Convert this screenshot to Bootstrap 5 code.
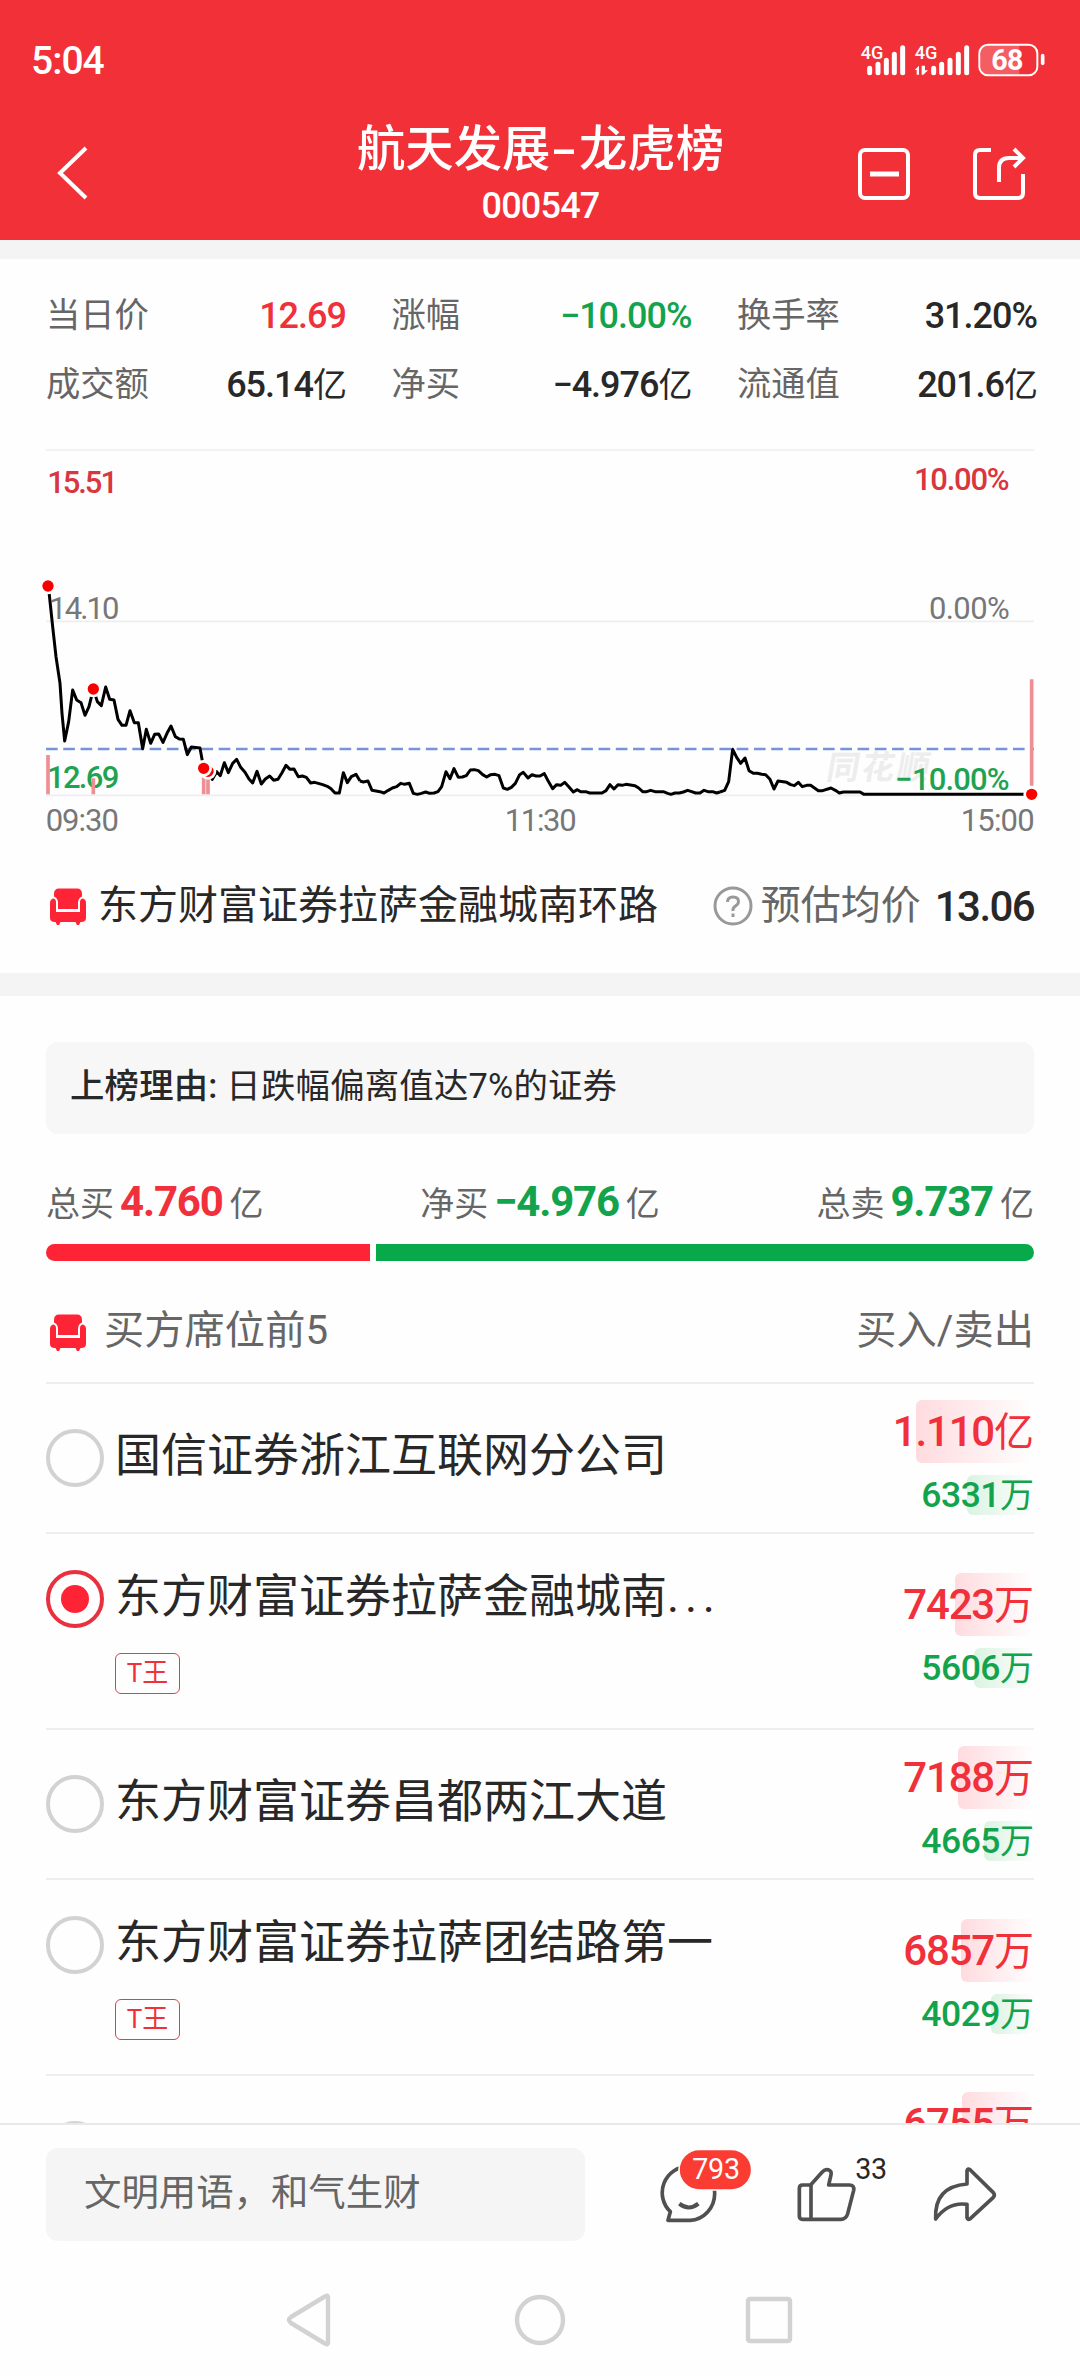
<!DOCTYPE html>
<html lang="zh-CN">
<head>
<meta charset="utf-8">
<meta name="viewport" content="width=device-width, initial-scale=1">
<title>航天发展-龙虎榜</title>
<link rel="stylesheet" href="https://cdn.jsdelivr.net/npm/bootstrap@5.3.0/dist/css/bootstrap.min.css">
<style>
:root{--up:#f0303a;--down:#12a34c;--ink:#282828;--muted:#666;--line:#eee}
html,body{height:100%}
body{font-family:Roboto,"Noto Sans CJK SC",sans-serif;color:var(--ink);background:#fefefe;overflow:hidden}
svg{display:block;flex:none}
.screen{width:1080px;height:2376px;overflow:hidden}
.gutter{padding-left:46px;padding-right:46px}
.up{color:var(--up)}.down{color:var(--down)}.muted{color:var(--muted)}
.topbar{background:#f13037;color:#fff;height:240px}
.status{height:120px;padding:0 34px 0 31px}
.clock{font-size:39px;font-weight:500;line-height:1;letter-spacing:-1px;padding-top:2px}
.titlebar{height:120px;padding:0 54px 0 57px}
.titlebar>svg,.actions{margin-top:27px}
.actions{gap:61px}
.heading{font-size:48.4px;font-weight:500;line-height:58px;margin-top:1px}
.dash{display:inline-block;transform:scaleX(1.6);margin:0 6px}
.code{font-size:36px;font-weight:500;line-height:50px;margin-top:2px;letter-spacing:-.8px}
.back-side{width:167px}
.strip{background:#f4f4f4;flex:none}
.stats{padding-top:22px;height:181px}
.stat-row{column-gap:45.5px;height:69px}
.stat{width:300px;flex:none;font-size:34.3px}
.stat b,.fig{font-weight:500;letter-spacing:-1px}
.stat b{font-size:36px}
.stat b small{font-size:34px;font-weight:400}
.seat{height:133px;font-size:40px;padding-bottom:1px}
.seat .price{font-size:42px;font-weight:500;letter-spacing:-1.6px;margin-left:14px}
.reason{margin:46px 46px 0;height:92px;border-radius:12px;background:#f7f7f7;padding:0 24px 3px;font-size:34.4px;letter-spacing:.2px}
.reason strong{font-weight:500}
.totals{height:64px;margin-top:35px;font-size:34px}
.totals b{font-size:42px;font-weight:700;letter-spacing:-1.2px;margin:0 7px 0 6px}
.balance{gap:6px;height:17px;margin-top:11px}
.balance span:first-child{background:#ff2435;border-radius:9px 0 0 9px}
.balance span:last-child{background:#08a94b;border-radius:0 9px 9px 0}
.seats-head{height:121px;font-size:40.2px;padding-top:20px;letter-spacing:.1px}
.seats-head span:first-of-type{padding-left:2px}
.seat-list{flex:1;min-height:0;overflow:hidden}
.entry{border-top:2px solid var(--line);height:150px;flex:none}
.entry.tagged{height:196px}
.pick{width:58px;height:58px;border:4px solid #d2d2d2;border-radius:50%;margin-top:45px;flex:none}
.tagged .pick{margin-top:36px}
.pick.on{border-color:#e8303f;padding:11px}
.pick.on::before{content:"";display:block;width:100%;height:100%;border-radius:50%;background:#ff2435}
.who{margin-left:11px}
.name{font-size:46px;line-height:60px;margin-top:41px;white-space:nowrap}
.name i{font-style:normal;letter-spacing:5.8px}
.tagged .name{margin-top:32px}
.label-t{width:65px;height:41px;border:1.5px solid #d04552;border-radius:6px;color:var(--up);font-size:26px;margin-top:27px}
.deal{gap:12px;padding-bottom:2px}
.buy,.sell{font-weight:500;text-align:right;white-space:nowrap;position:relative;z-index:0}
.buy{height:63px;line-height:63px;font-size:42px;color:var(--up);letter-spacing:-1.2px}
.sell{height:40px;line-height:41px;font-size:35.5px;color:var(--down);letter-spacing:-.5px}
.buy span,.sell span{font-weight:400;letter-spacing:0}
.buy span{font-size:40px}.sell span{font-size:34px}
.tint{position:absolute;z-index:-1;right:0;top:0;bottom:0;border-radius:6px 0 0 6px}
.buy .tint{background:linear-gradient(90deg,#ffdbdf,#fefefe)}
.sell .tint{background:linear-gradient(90deg,#dbf3e2,#fefefe)}
.composer{border-top:2px solid #e9e9e9;height:135px;flex:none;padding-top:23px}
.prompt{width:539px;height:93px;border-radius:12px;background:#f5f5f5;color:var(--muted);font-size:37.4px;padding:0 0 3px 38px}
.tools{margin-left:75px}
.sysnav{height:118px;flex:none}
.sysnav svg path,.sysnav svg circle,.sysnav svg rect{fill:none;stroke:#d2d2d2;stroke-width:4.4;stroke-linejoin:round}
</style>
<script src="https://cdn.jsdelivr.net/npm/bootstrap@5.3.0/dist/js/bootstrap.bundle.min.js"></script>
</head>
<body>
<svg width="0" height="0" class="position-absolute">
  <symbol id="sofa" viewBox="0 0 36 38">
    <g fill="#ff2435"><path d="M9 1.500H27Q32 1.500 32 7V9.500Q28 11 28 16V22H8V16Q8 11 4 9.500V7Q4 1.500 9 1.500Z"/>
    <path d="M3.500 11.500Q6 12 6 15V25H30V15Q30 12 32.500 11.500Q36 12 36 16V31Q36 35 31 35H5Q0 35 0 31V16Q0 12 3.500 11.500Z"/>
    <path d="M5 34H11L9 38H7ZM25 34H31L29 38H27Z"/></g>
  </symbol>
</svg>
<div class="screen d-flex flex-column">
  <header class="topbar flex-shrink-0">
    <div class="status d-flex justify-content-between align-items-center">
      <div class="clock">5:04</div>
      <svg width="186" height="36" viewBox="0 0 558 108" fill="#fff">
        <g transform="translate(-63 -33)">
          <g font-family="Roboto" font-weight="500" font-size="55"><text x="65" y="85" textLength="68" lengthAdjust="spacingAndGlyphs">4G</text><text x="227" y="85" textLength="68" lengthAdjust="spacingAndGlyphs">4G</text></g>
          <g stroke="#fff" stroke-width="15" stroke-linecap="round"><path d="M92 112V125M117 100V125M142 88V125M166 70V125M191 50V125M284 112V125M308 100V125M333 88V125M358 70V125M383 50V125"/></g>
          <path d="M240 131V104L227 117H233V131ZM248 104V131H253L267 118H258V104Z"/>
          <path d="M438 43H541V131H438Q425 131 425 118V56Q425 43 438 43Z" opacity=".22"/>
          <rect x="421" y="41" width="174" height="92" rx="26" fill="none" stroke="#fff" stroke-width="6"/>
          <path d="M611 74V97" stroke="#fff" stroke-width="11" stroke-linecap="round"/>
          <text x="457" y="116" font-family="Roboto" font-weight="700" font-size="86" textLength="96">68</text>
        </g>
      </svg>
    </div>
    <div class="titlebar d-flex justify-content-between align-items-start">
      <div class="back-side pt-4"><svg width="32" height="56" viewBox="0 0 32 56"><path d="M29 5L3 30L29 55" transform="translate(0 -1)" fill="none" stroke="#fff" stroke-width="4"/></svg></div>
      <div class="text-center"><div class="heading">航天发展<span class="dash">-</span>龙虎榜</div><div class="code">000547</div></div>
      <div class="actions d-flex">
        <svg width="54" height="54" viewBox="0 0 54 54" fill="none" stroke="#fff" stroke-width="4"><rect x="3" y="3" width="48" height="48" rx="5"/><path d="M13 27H42" stroke-width="5"/></svg>
        <svg width="54" height="54" viewBox="0 0 54 54" fill="none" stroke="#fff" stroke-width="4"><path d="M19 3H8Q3 3 3 8V46Q3 51 8 51H46Q51 51 51 46V27"/><path d="M27 35V21Q27 11 37 11H50M42 2L51 11L42 20"/></svg>
      </div>
    </div>
  </header>
  <div class="strip" style="height:19px"></div>

  <section class="stats gutter flex-shrink-0">
    <div class="stat-row d-flex align-items-center">
      <div class="stat d-flex justify-content-between align-items-center"><span class="muted">当日价</span><b class="up">12.69</b></div>
      <div class="stat d-flex justify-content-between align-items-center"><span class="muted">涨幅</span><b class="down">−10.00%</b></div>
      <div class="stat d-flex justify-content-between align-items-center"><span class="muted">换手率</span><b>31.20%</b></div>
    </div>
    <div class="stat-row d-flex align-items-center">
      <div class="stat d-flex justify-content-between align-items-center"><span class="muted">成交额</span><b>65.14<small>亿</small></b></div>
      <div class="stat d-flex justify-content-between align-items-center"><span class="muted">净买</span><b>−4.976<small>亿</small></b></div>
      <div class="stat d-flex justify-content-between align-items-center"><span class="muted">流通值</span><b>201.6<small>亿</small></b></div>
    </div>
  </section>

  <svg width="1080" height="400" viewBox="0 1320 3240 1200" font-family="Roboto" font-size="93">
    <path d="M138 1350H3102M138 1864H3102M138 2386H3102" stroke="#eee" stroke-width="5"/>
    <text x="2476" y="2337" font-family="Noto Sans CJK SC" font-weight="700" font-size="98" fill="#ededed" transform="translate(412 0) skewX(-10)" textLength="308">同花顺</text>
    <path d="M138 2247H3102" stroke="#7893da" stroke-width="7" stroke-dasharray="35 16.800"/>
    <g fill="#777">
      <text x="142" y="1479" fill="#d9363f" font-weight="500" textLength="212">15.51</text>
      <text x="2742" y="1470" fill="#d9363f" font-weight="500" textLength="287">10.00%</text>
      <text x="148" y="1857" textLength="210">14.10</text>
      <text x="2787" y="1857" textLength="242">0.00%</text>
      <text x="141" y="2364" fill="#1fa352" font-weight="500" textLength="217">12.69</text>
      <text x="2686" y="2371" fill="#1fa352" font-weight="500" textLength="343">−10.00%</text>
      <text x="137" y="2494" textLength="220">09:30</text>
      <text x="1514" y="2494" textLength="216">11:30</text>
      <text x="2882" y="2494" textLength="222">15:00</text>
    </g>
    <path d="M144 2265V2383M280 2335V2383M611 2330V2383M624 2330V2383M3095 2038V2357" stroke="#ee8f96" stroke-width="11"/>
    <g fill="none" stroke="#000" stroke-width="9" stroke-linejoin="round">
      <polyline transform="translate(0 1680)" points="144,78 148,105 158,200 168,290 180,370 186,460 194,543 206,485 218,390 230,420 243,428 255,466 267,440 280,387 292,425 304,437 317,381 329,418 342,420 354,478 366,496 378,496 390,452 403,488 415,488 428,566 439,508 452,550 464,523 476,522 489,547 501,520 513,498 526,530 538,537 550,538 562,584 574,561 600,564 611,625 625,635 637,658 650,635 661,647 673,608 685,638 698,610 710,598 722,622 735,637 747,657 758,669 771,634 784,672 796,657 809,648 821,661 834,658 846,638 858,616 870,628 882,627 895,650 907,648 919,652 932,669 944,667 968,674 982,679 993,686 1005,699 1018,699 1030,638 1042,668 1054,650 1068,643 1080,663"/>
      <polyline transform="translate(1080 1920)" points="0,423 10,426 24,423 36,451 48,453 60,455 72,459 85,451 97,444 110,440 122,430 134,433 148,430 160,460 172,463 184,460 197,456 209,460 222,459 234,455 245,440 258,395 270,416 282,386 295,412 307,411 319,407 331,390 343,389 355,392 368,404 380,411 392,404 405,403 417,407 430,444 442,448 454,442 466,430 479,404 490,397 504,414 516,404 528,408 540,408 553,401 565,424 578,446 590,434 602,436 614,427 627,441 640,456 652,449 662,455 677,455 689,459 726,459 738,452 750,434 762,447 774,434 786,436 798,433 825,437 836,444 848,455 860,455 872,451 885,455 910,455 923,460 933,463 945,459 958,459 970,456 983,451 995,455 1007,459 1020,459 1032,451 1044,455 1058,455 1070,459 1080,456"/>
      <polyline transform="translate(2160 1920)" points="0,456 14,451 26,425 38,328 50,352 62,370 75,354 87,392 100,400 112,400 125,403 137,404 150,418 162,447 174,423 200,427 212,434 223,437 235,427 247,440 260,436 272,436 295,452 308,452 333,444 346,451 358,459 370,456 420,456 432,463 935,463"/>
    </g>
    <g fill="#f80000" stroke="#fff" stroke-width="8">
      <circle cx="144" cy="1758" r="21"/><circle cx="280" cy="2067" r="21"/><circle cx="624" cy="2314" r="21"/><circle cx="611" cy="2305" r="21"/><circle cx="3095" cy="2383" r="21"/>
    </g>
  </svg>

  <section class="seat gutter d-flex align-items-center flex-shrink-0">
    <svg width="36" height="38" class="ms-1 me-1"><use href="#sofa"/></svg>
    <span class="ps-2">东方财富证券拉萨金融城南环路</span>
    <svg class="ms-auto" width="40" height="40" viewBox="0 0 40 40" fill="none" stroke="#999" stroke-width="3"><circle cx="20" cy="20" r="18"/><path d="M14.500 16Q14.500 11 20 11T25.500 15.500Q25.500 18 22.500 20T20 25M20 27.500V31"/></svg>
    <span class="muted ps-2">预估均价</span><span class="price">13.06</span>
  </section>
  <div class="strip" style="height:23px"></div>

  <div class="reason d-flex align-items-center flex-shrink-0"><span><strong>上榜理由:</strong> 日跌幅偏离值达7%的证券</span></div>

  <section class="gutter flex-shrink-0">
    <div class="totals d-flex justify-content-between align-items-center muted">
      <div>总买<b class="up">4.760</b>亿</div><div>净买<b class="down">−4.976</b>亿</div><div>总卖<b class="down">9.737</b>亿</div>
    </div>
    <div class="balance d-flex"><span style="width:324px"></span><span style="width:658px"></span></div>
    <div class="seats-head d-flex align-items-center muted">
      <svg width="36" height="38" class="ms-1 me-3"><use href="#sofa"/></svg><span>买方席位前5</span><span class="ms-auto">买入/卖出</span>
    </div>
  </section>

  <section class="seat-list gutter d-flex flex-column">
    <div class="entry d-flex">
      <span class="pick"></span>
      <div class="who"><div class="name">国信证券浙江互联网分公司</div></div>
      <div class="deal ms-auto d-flex flex-column justify-content-center"><div class="buy"><i class="tint" style="width:118px"></i>1.110<span>亿</span></div><div class="sell"><i class="tint" style="width:67px"></i>6331<span>万</span></div></div>
    </div>
    <div class="entry tagged d-flex">
      <span class="pick on"></span>
      <div class="who"><div class="name">东方财富证券拉萨金融城南<i>...</i></div><div class="label-t d-flex align-items-center justify-content-center">T王</div></div>
      <div class="deal ms-auto d-flex flex-column justify-content-center"><div class="buy"><i class="tint" style="width:79px"></i>7423<span>万</span></div><div class="sell"><i class="tint" style="width:60px"></i>5606<span>万</span></div></div>
    </div>
    <div class="entry d-flex">
      <span class="pick"></span>
      <div class="who"><div class="name">东方财富证券昌都两江大道</div></div>
      <div class="deal ms-auto d-flex flex-column justify-content-center"><div class="buy"><i class="tint" style="width:76px"></i>7188<span>万</span></div><div class="sell"><i class="tint" style="width:50px"></i>4665<span>万</span></div></div>
    </div>
    <div class="entry tagged d-flex">
      <span class="pick"></span>
      <div class="who"><div class="name">东方财富证券拉萨团结路第一</div><div class="label-t d-flex align-items-center justify-content-center">T王</div></div>
      <div class="deal ms-auto d-flex flex-column justify-content-center"><div class="buy"><i class="tint" style="width:73px"></i>6857<span>万</span></div><div class="sell"><i class="tint" style="width:43px"></i>4029<span>万</span></div></div>
    </div>
    <div class="entry d-flex">
      <span class="pick"></span>
      <div class="deal ms-auto d-flex flex-column pt-3"><div class="buy"><i class="tint" style="width:72px"></i>6755<span>万</span></div></div>
    </div>
  </section>

  <footer class="composer gutter d-flex align-items-start">
    <div class="prompt d-flex align-items-center">文明用语，和气生财</div>
    <svg class="tools" width="360" height="90" viewBox="60 54 1080 270" fill="none" stroke="#505050" stroke-width="11" stroke-linejoin="round">
      <path d="M145 109A79 79 0 0 0 91 245L84 271H150A78 80 0 0 0 224 190Q224 109 145 109Z"/>
      <path d="M118 221Q146 244 175 221" stroke-width="12"/>
      <rect x="117" y="58" width="218" height="122" rx="61" fill="#fb3c33" stroke="#fefefe" stroke-width="5"/>
      <path d="M488 165H512L546 127Q560 112 572 124Q575 128 572 139L566 165H628Q644 165 641 181L623 251Q618 268 602 268H488Q478 268 478 258V175Q478 165 488 165ZM513 166V267"/>
      <path d="M981 162V122Q983 114 991 120L1060 188Q1066 195 1060 202L991 266Q983 271 981 263V223Q925 215 887 267Q882 170 981 162Z"/>
      <g stroke="none" font-family="Roboto" font-size="86"><text x="157" y="147" fill="#fff" textLength="143">793</text><text x="646" y="147" fill="#282828" textLength="95">33</text></g>
    </svg>
  </footer>
  <nav class="sysnav d-flex">
    <svg width="1080" height="118" viewBox="0 2258 1080 118"><path d="M324 2297Q328 2294 328 2298V2342Q328 2346 324 2343L291 2323Q287 2320 291 2317Z"/><circle cx="540" cy="2320" r="23"/><rect x="748" y="2299" width="42" height="42" rx="2"/></svg>
  </nav>
</div>
</body>
</html>
